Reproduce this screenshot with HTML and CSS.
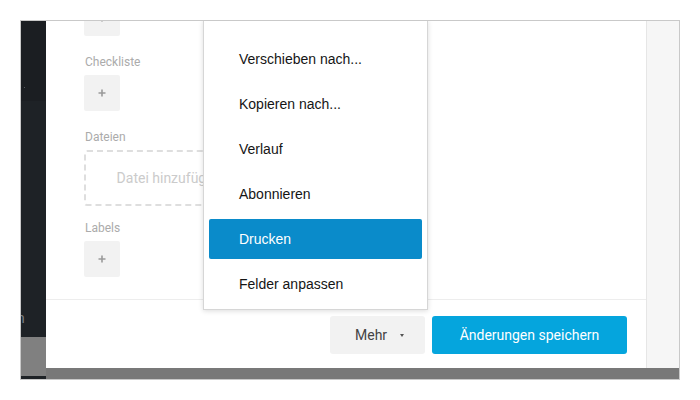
FILE: index.html
```html
<!DOCTYPE html>
<html lang="de">
<head>
<meta charset="utf-8">
<link rel="stylesheet" href="styles.css">
</head>
<body>
<div class="frame">
  <div class="backdrop">
    <div class="sidebar">
      <div class="sidebar-top"><span class="dot"></span></div>
      <div class="sidebar-mid"><span class="cut">n</span></div>
      <div class="sidebar-dim"></div>
      <div class="sidebar-end"></div>
    </div>
  </div>

  <div class="modal">
    <div class="modal-main">
      <div class="modal-body">
        <div class="add-box"><svg viewBox="0 0 8 8" width="8" height="8"><path d="M4 0.5V7.5M0.5 4H7.5" stroke="#9a9a9a" stroke-width="1.6"/></svg></div>
        <div class="label l-check">Checkliste</div>
        <div class="add-box"><svg viewBox="0 0 8 8" width="8" height="8"><path d="M4 0.5V7.5M0.5 4H7.5" stroke="#9a9a9a" stroke-width="1.6"/></svg></div>
        <div class="label l-files">Dateien</div>
        <div class="dropzone">Datei hinzufügen</div>
        <div class="label l-labels">Labels</div>
        <div class="add-box"><svg viewBox="0 0 8 8" width="8" height="8"><path d="M4 0.5V7.5M0.5 4H7.5" stroke="#9a9a9a" stroke-width="1.6"/></svg></div>
      </div>
      <div class="modal-footer">
        <button class="btn btn-more">Mehr<span class="caret"></span></button>
        <button class="btn btn-save">Änderungen speichern</button>
      </div>
    </div>
    <div class="modal-aside"></div>
  </div>

  <ul class="menu">
    <li class="menu-item">Verschieben nach...</li>
    <li class="menu-item">Kopieren nach...</li>
    <li class="menu-item">Verlauf</li>
    <li class="menu-item">Abonnieren</li>
    <li class="menu-item active">Drucken</li>
    <li class="menu-item">Felder anpassen</li>
  </ul>
</div>
</body>
</html>
```

FILE: styles.css
```css
* { box-sizing: border-box; }

html, body {
  margin: 0;
  padding: 0;
  background: #ffffff;
}

body {
  padding: 20px;
  font-family: Roboto, "Liberation Sans", Arial, sans-serif;
}

.frame {
  position: relative;
  width: 660px;
  height: 360px;
  border: 1px solid #c9c9c9;
  overflow: hidden;
  background: #787878;
}

.backdrop {
  display: flex;
  height: 100%;
}

.sidebar {
  width: 25px;
  display: flex;
  flex-direction: column;
}

.sidebar-top {
  height: 80px;
  background: #1b1e22;
  position: relative;
}

.dot {
  position: absolute;
  left: 3px;
  top: 66px;
  width: 1px;
  height: 1px;
  background: #55595e;
}

.sidebar-mid {
  height: 236px;
  background: #1e2226;
  display: flex;
  align-items: flex-end;
  padding-bottom: 12px;
  overflow: hidden;
}

.cut {
  margin-left: -4px;
  color: #7a7e84;
  font-size: 14px;
  line-height: 14px;
}

.sidebar-dim {
  height: 39px;
  background: #808080;
}

.sidebar-end {
  height: 3px;
  background: #1e2226;
}

.modal {
  position: absolute;
  left: 25px;
  top: 0;
  width: 640px;
  height: 347px;
  background: #ffffff;
  display: flex;
}

.modal-main {
  width: 600px;
  display: flex;
  flex-direction: column;
}

.modal-body {
  padding-left: 38px;
  display: flex;
  flex-direction: column;
  align-items: flex-start;
  margin-top: -21px;
  height: 299px;
}

.add-box {
  width: 36px;
  height: 36px;
  background: #f2f2f2;
  border-radius: 2px;
  display: flex;
  align-items: center;
  justify-content: center;
}

.label {
  font-size: 12px;
  line-height: 16px;
  color: #ababab;
  padding-left: 1px;
}

.l-check { margin-top: 18px; margin-bottom: 5px; }
.l-files { margin-top: 18px; margin-bottom: 5px; }
.l-labels { margin-top: 14px; margin-bottom: 5px; }

.dropzone {
  width: 170px;
  height: 56px;
  border: 2px dashed #dedede;
  border-radius: 3px;
  display: flex;
  align-items: center;
  justify-content: center;
  font-size: 14px;
  color: #cbcbcb;
}

.modal-footer {
  flex: 1;
  border-top: 1px solid #ededed;
  display: flex;
  justify-content: flex-end;
  align-items: flex-start;
  gap: 7px;
  padding-top: 16px;
  padding-right: 19px;
}

.btn {
  height: 38px;
  border: 0;
  border-radius: 3px;
  font-family: Roboto, "Liberation Sans", Arial, sans-serif;
  font-size: 14px;
  cursor: pointer;
  display: flex;
  align-items: center;
}

.btn-more {
  width: 95px;
  background: #f2f2f2;
  color: #444444;
  padding: 0 0 0 25px;
}

.caret {
  margin-left: 13px;
  width: 0;
  height: 0;
  border-left: 2.5px solid transparent;
  border-right: 2.5px solid transparent;
  border-top: 3px solid #555555;
}

.btn-save {
  width: 195px;
  background: #05a5dd;
  color: #ffffff;
  justify-content: center;
}

.modal-aside {
  flex: 1;
  background: #f6f6f6;
  border-left: 1px solid #e6e6e6;
}

.menu {
  position: absolute;
  left: 182px;
  top: -1px;
  width: 225px;
  margin: 0;
  padding: 18px 5px 5px 5px;
  list-style: none;
  background: #ffffff;
  border: 1px solid #d6d6d6;
  box-shadow: 0 1px 5px rgba(0, 0, 0, 0.14);
  display: flex;
  flex-direction: column;
  gap: 5px;
  font-family: "Liberation Sans", Arial, sans-serif;
}

.menu-item {
  height: 40px;
  line-height: 40px;
  padding-left: 30px;
  font-size: 14px;
  color: #151515;
  border-radius: 2px;
}

.menu-item.active {
  background: #0a8bca;
  color: #ffffff;
}
```
